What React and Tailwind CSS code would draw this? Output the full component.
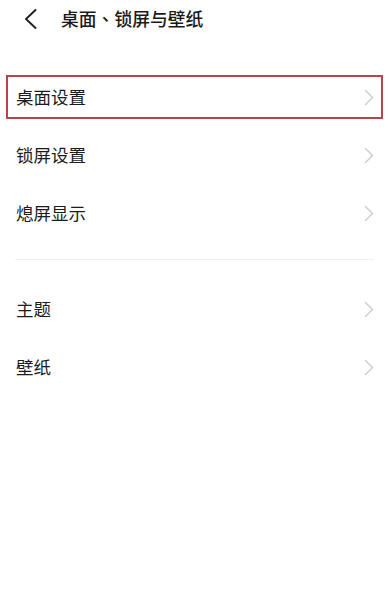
import React from "react";

const font = { fontFamily: '"Noto Sans CJK SC", "Noto Sans", sans-serif' };

function Chevron() {
  return (
    <svg width="10" height="17" viewBox="0 0 10 17" fill="none">
      <path d="M1.5 1.5 L8.5 8.5 L1.5 15.5" stroke="#c9c9c9" strokeWidth="1.3" strokeLinecap="round" strokeLinejoin="round" />
    </svg>
  );
}

function Row({ label, highlight }) {
  return (
    <div className="relative flex h-[58px] items-center justify-between pl-[16px] pr-[15px]">
      <span className="text-[17.5px] leading-none text-[#1c1c1c]">{label}</span>
      <Chevron />
      {highlight && (
        <div className="pointer-events-none absolute left-[6px] right-[6px] top-[7px] bottom-[7px] border-[2.5px] border-[#b4474c]" />
      )}
    </div>
  );
}

export default function App() {
  return (
    <div className="h-[611px] w-[389px] bg-white" style={font}>
      <div className="flex h-[37px] items-center">
        <div className="ml-[24px] flex w-[37px] items-center">
          <svg width="13" height="20" viewBox="0 0 13 20" fill="none">
            <path d="M11.5 1 L2 10 L11.5 19" stroke="#222" strokeWidth="1.9" strokeLinecap="round" strokeLinejoin="round" />
          </svg>
        </div>
        <span className="text-[17.8px] font-medium leading-none text-[#1a1a1a]">
          桌面<span className="[font-family:'Noto_Sans_CJK_TC',sans-serif]">、</span>锁屏与壁纸
        </span>
      </div>
      <div className="pt-[31px]">
        <Row label="桌面设置" highlight />
        <Row label="锁屏设置" />
        <Row label="熄屏显示" />
        <div className="mx-[15px] mt-[17px] mb-[20px] h-px bg-[#efefef]" />
        <Row label="主题" />
        <Row label="壁纸" />
      </div>
    </div>
  );
}
